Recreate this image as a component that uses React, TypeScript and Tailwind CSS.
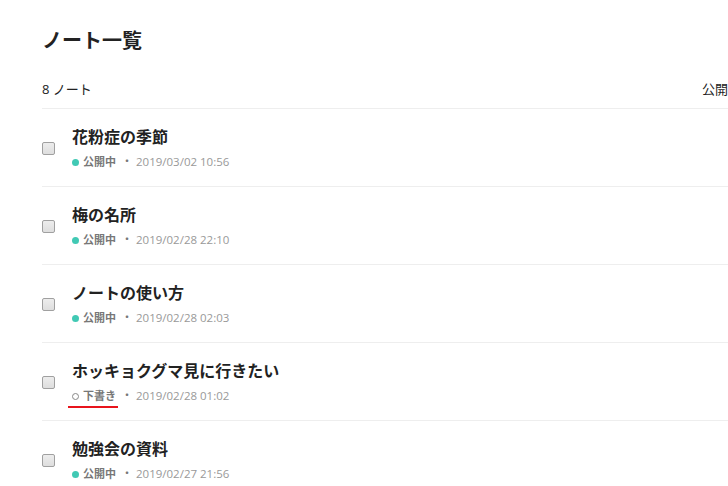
import React from "react";

type Note = { title: string; status: "pub" | "draft"; date: string };

const notes: Note[] = [
  { title: "花粉症の季節", status: "pub", date: "2019/03/02 10:56" },
  { title: "梅の名所", status: "pub", date: "2019/02/28 22:10" },
  { title: "ノートの使い方", status: "pub", date: "2019/02/28 02:03" },
  { title: "ホッキョクグマ見に行きたい", status: "draft", date: "2019/02/28 01:02" },
  { title: "勉強会の資料", status: "pub", date: "2019/02/27 21:56" },
];

export default function App() {
  return (
    <div
      className="relative w-[728px] h-[486px] overflow-hidden bg-white text-[#222]"
      style={{ fontFamily: '"Open Sans", "Noto Sans CJK JP", sans-serif' }}
    >
      <div className="pl-[42px] pt-[27px]">
        <h1 className="text-[20px] leading-[28px] font-bold text-[#222]">ノート一覧</h1>
        <div className="mt-[24px] flex items-center justify-between border-b border-[#eeeeee] pb-[9px] text-[13px] leading-[20px] text-[#222]">
          <span>8 ノート</span>
          <span className="whitespace-nowrap">公開</span>
        </div>
        {notes.map((n, i) => (
          <div
            key={i}
            className="flex items-center border-b border-[#eeeeee] pt-[16px] pb-[15px]"
          >
            <div className="w-[13px] h-[13px] rounded-[2px] border border-[#a0a0a0] bg-gradient-to-b from-[#ededed] to-[#dedede] shrink-0" />
            <div className="ml-[17px] flex flex-col gap-[4px]">
              <div className="text-[16px] leading-[24px] font-bold text-[#222]">{n.title}</div>
              <div className="flex items-center text-[12px] leading-[18px]">
                {n.status === "pub" ? (
                  <span className="w-[7px] h-[7px] rounded-full bg-[#41c9b4]" />
                ) : (
                  <span className="w-[7px] h-[7px] rounded-full border border-[#888]" />
                )}
                <span className="ml-[4px] text-[11px] font-bold text-[#777]">
                  {n.status === "pub" ? "公開中" : "下書き"}
                </span>
                <span className="ml-[5px] text-[#777]">・</span>
                <span className="ml-[3px] text-[11.5px] text-[#999]">{n.date}</span>
              </div>
            </div>
          </div>
        ))}
      </div>
      <div className="absolute left-[68px] top-[406px] w-[50px] h-[2px] bg-[#e8141c]" />
    </div>
  );
}
